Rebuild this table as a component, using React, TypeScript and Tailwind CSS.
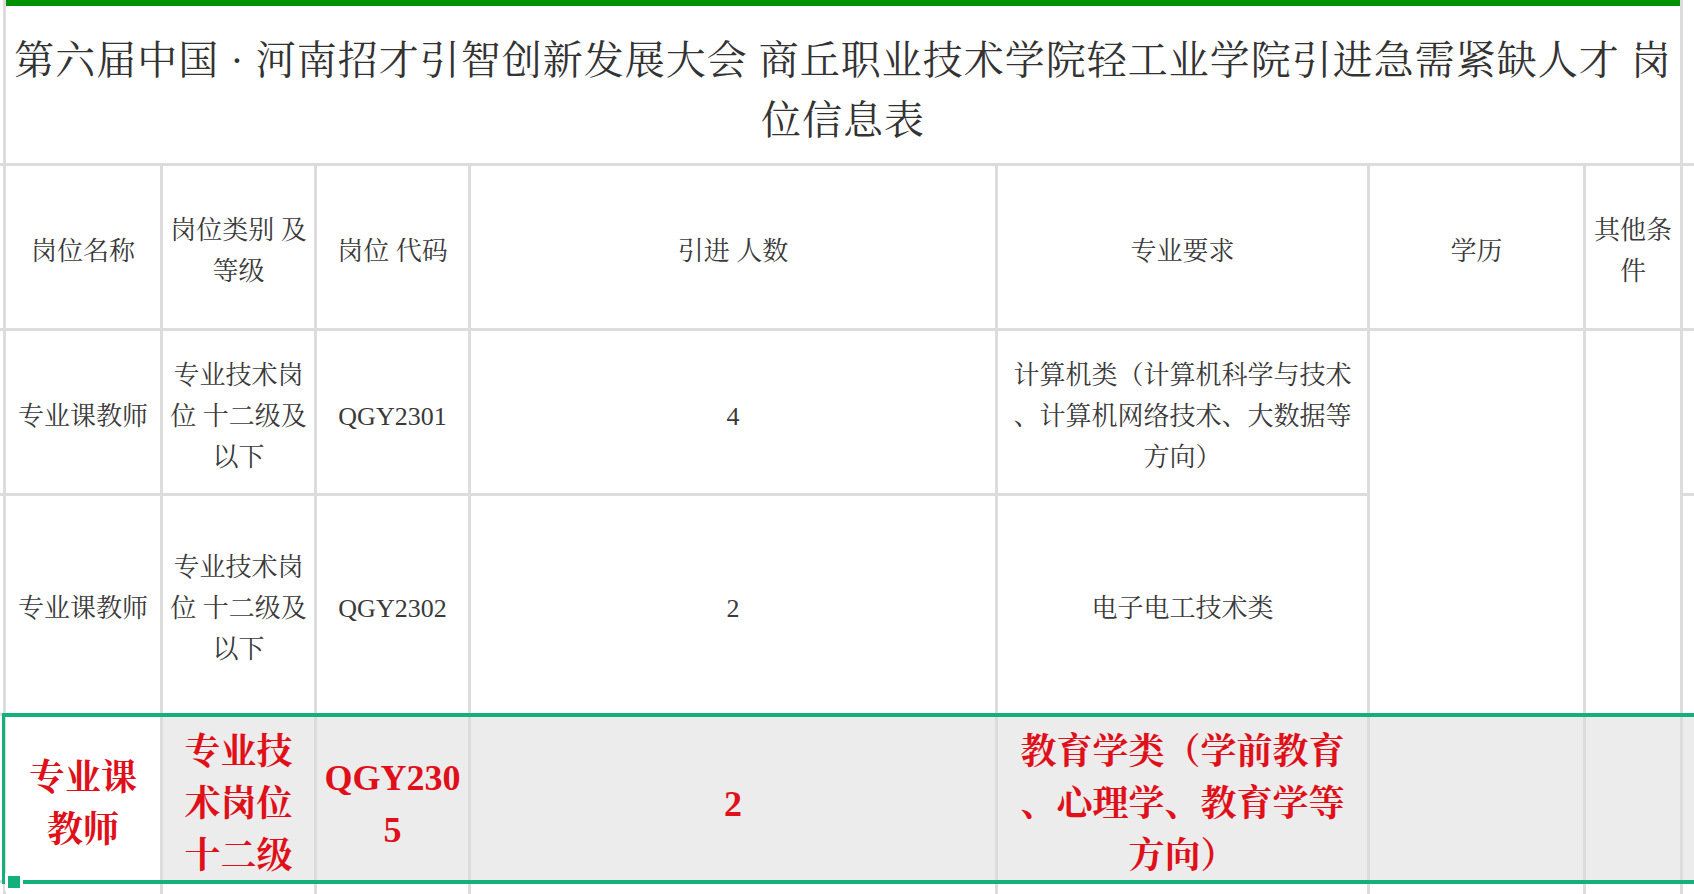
import React from "react";

const FONT = "font-['Liberation_Serif','Noto_Serif_CJK_SC','Noto_Sans_CJK_SC',serif]";

function Lines({ lines }: { lines: string[] }) {
  return (
    <div className="flex flex-col items-center">
      {lines.map((l, i) => (
        <span key={i} className="block whitespace-pre">
          {l}
        </span>
      ))}
    </div>
  );
}

function Cell({
  children,
  className = "",
}: {
  children?: React.ReactNode;
  className?: string;
}) {
  return (
    <div
      className={`flex items-center justify-center text-center overflow-hidden ${className}`}
    >
      {children}
    </div>
  );
}

const normal = "bg-white text-[#3a3a3a] text-[26px] leading-[41px] pt-[8px]";
const red = "bg-[#ececec] text-[#e0101a] font-bold text-[36px] leading-[52px] pt-[12px]";

export default function App() {
  return (
    <div className={`relative w-[1694px] h-[894px] overflow-hidden bg-white ${FONT}`}>
      <div className="grid h-[894px] gap-[3px] bg-[#dcdcdc] grid-cols-[3px_154px_151px_151px_524px_369px_213px_94px_1fr] grid-rows-[163px_162px_162px_217px_164px_1fr]">
        {/* Title row */}
        <div className="bg-white" />
        <div className="col-span-7 bg-white border-t-[6px] border-[#009100] flex flex-col items-center justify-center pt-[12px] text-[#333] text-[40px] leading-[60px] tracking-[1px] text-center">
          <span className="block whitespace-nowrap">
            第六届中国 · 河南招才引智创新发展大会 商丘职业技术学院轻工业学院引进急需紧缺人才 岗
          </span>
          <span className="block whitespace-nowrap">位信息表</span>
        </div>
        <div className="bg-white" />

        {/* Header row */}
        <div className="bg-white" />
        <Cell className={normal}>岗位名称</Cell>
        <Cell className={normal}>
          <Lines lines={["岗位类别 及", "等级"]} />
        </Cell>
        <Cell className={normal}>岗位 代码</Cell>
        <Cell className={normal}>引进 人数</Cell>
        <Cell className={normal}>专业要求</Cell>
        <Cell className={normal}>学历</Cell>
        <Cell className={normal}>
          <Lines lines={["其他条", "件"]} />
        </Cell>
        <div className="bg-white" />

        {/* Row 1 */}
        <div className="bg-white" />
        <Cell className={normal}>专业课教师</Cell>
        <Cell className={normal}>
          <Lines lines={["专业技术岗", "位 十二级及", "以下"]} />
        </Cell>
        <Cell className={normal}>QGY2301</Cell>
        <Cell className={normal}>4</Cell>
        <Cell className={normal}>
          <Lines
            lines={[
              "计算机类（计算机科学与技术",
              "、计算机网络技术、大数据等",
              "方向）",
            ]}
          />
        </Cell>
        <div className={`row-span-2 ${normal}`} />
        <div className={`row-span-2 ${normal}`} />
        <div className="bg-white" />

        {/* Row 2 */}
        <div className="bg-white" />
        <Cell className={normal}>专业课教师</Cell>
        <Cell className={normal}>
          <Lines lines={["专业技术岗", "位 十二级及", "以下"]} />
        </Cell>
        <Cell className={normal}>QGY2302</Cell>
        <Cell className={normal}>2</Cell>
        <Cell className={normal}>电子电工技术类</Cell>
        <div className="bg-white" />

        {/* Row 3 (selected) */}
        <div className="bg-white" />
        <Cell className={`${red} !bg-white`}>
          <Lines lines={["专业课", "教师"]} />
        </Cell>
        <Cell className={red}>
          <Lines lines={["专业技", "术岗位", "十二级"]} />
        </Cell>
        <Cell className={red}>
          <Lines lines={["QGY230", "5"]} />
        </Cell>
        <Cell className={red}>2</Cell>
        <Cell className={red}>
          <Lines lines={["教育学类（学前教育", "、心理学、教育学等", "方向）"]} />
        </Cell>
        <Cell className={red} />
        <Cell className={red} />
        <div className="bg-[#ececec]" />

        {/* Row 4 (partially visible) */}
        <div className="bg-white" />
        <div className="bg-white" />
        <div className="bg-white" />
        <div className="bg-white" />
        <div className="bg-white" />
        <div className="bg-white" />
        <div className="bg-white" />
        <div className="bg-white" />
        <div className="bg-white" />
      </div>

      {/* Selection overlay */}
      <div className="pointer-events-none absolute left-[2px] top-[713px] h-[171px] w-[1700px] border-t-[4px] border-b-[4px] border-l-[3px] border-[#14b07c]" />
      <div className="pointer-events-none absolute left-[5px] top-[873px] h-[18px] w-[18px] border-[3px] border-white bg-[#14b07c]" />
    </div>
  );
}
